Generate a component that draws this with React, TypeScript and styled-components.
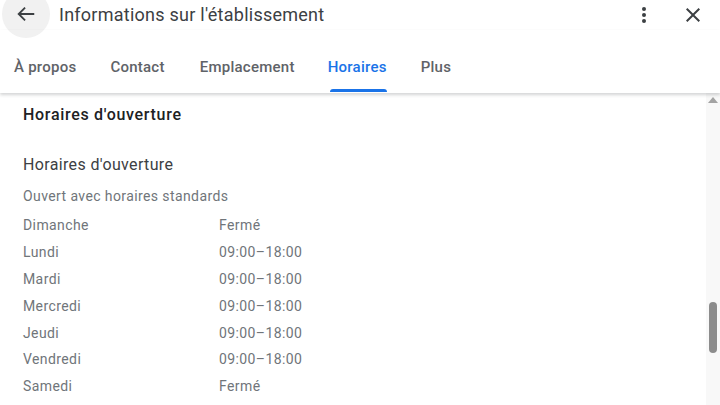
import React from "react";
import styled, { createGlobalStyle } from "styled-components";

const GlobalStyle = createGlobalStyle`
  html, body {
    margin: 0;
    padding: 0;
    background: #ffffff;
    font-family: Roboto, "Liberation Sans", Arial, sans-serif;
    overflow: hidden;
  }
`;

const Page = styled.div`
  width: 720px;
  height: 405px;
  display: flex;
  flex-direction: column;
  overflow: hidden;
  background: #fff;
`;

const TopBar = styled.div`
  height: 30px;
  display: flex;
  align-items: center;
  padding: 0 0 0 2px;
`;

const BackButton = styled.div`
  width: 48px;
  height: 48px;
  border-radius: 50%;
  background: #f1f1f1;
  display: flex;
  align-items: center;
  justify-content: center;
  margin-top: -2px;
  flex-shrink: 0;
`;

const Title = styled.div`
  margin-left: 9px;
  font-size: 18px;
  letter-spacing: 0.25px;
  color: #3c4043;
  flex: 1;
  margin-top: -2px;
`;

const IconButton = styled.div<{ $gap: number }>`
  width: 24px;
  height: 24px;
  display: flex;
  align-items: center;
  justify-content: center;
  margin-right: ${(p) => p.$gap}px;
`;

const Tabs = styled.div`
  display: flex;
  height: 63px;
  align-items: stretch;
  padding-left: 14px;
  box-shadow: 0 2px 3px rgba(60, 64, 67, 0.22);
  position: relative;
  z-index: 1;
`;

const Tab = styled.div<{ $active?: boolean; $gap: number }>`
  display: flex;
  flex-direction: column;
  justify-content: flex-end;
  margin-right: ${(p) => p.$gap}px;
  font-size: 15px;
  font-weight: 500;
  color: ${(p) => (p.$active ? "#1a73e8" : "#5f6368")};
  letter-spacing: 0.25px;
`;

const TabLabel = styled.span`
  padding: 0 0 13px 0;
`;

const TabLine = styled.div<{ $active?: boolean }>`
  height: 3px;
  margin: 0 0 1px 2px;
  border-radius: 3px 3px 0 0;
  background: ${(p) => (p.$active ? "#1a73e8" : "transparent")};
`;

const Body = styled.div`
  flex: 1;
  display: flex;
  min-height: 0;
`;

const Content = styled.div`
  flex: 1;
  padding: 12px 0 0 23px;
`;

const Section = styled.div`
  font-size: 16px;
  font-weight: 500;
  letter-spacing: 0.7px;
  color: #202124;
  line-height: 20px;
`;

const SubTitle = styled.div`
  font-size: 16px;
  letter-spacing: 0.35px;
  color: #3c4043;
  margin-top: 30px;
  line-height: 20px;
`;

const Note = styled.div`
  font-size: 14px;
  letter-spacing: 0.4px;
  color: #70757a;
  margin-top: 11px;
  line-height: 20px;
`;

const HoursTable = styled.div`
  margin-top: 6px;
  display: grid;
  grid-template-columns: 196px auto;
  grid-auto-rows: 26.8px;
  align-items: center;
  font-size: 14px;
  letter-spacing: 0.4px;
  color: #70757a;
`;

const ScrollTrack = styled.div`
  width: 14px;
  background: #f8f8f8;
  display: flex;
  flex-direction: column;
  align-items: center;
`;

const ScrollArrow = styled.div`
  margin-top: 4px;
  width: 0;
  height: 0;
  border-left: 5px solid transparent;
  border-right: 5px solid transparent;
  border-bottom: 6px solid #a3a3a3;
`;

const ScrollThumb = styled.div`
  margin-top: 199px;
  width: 8px;
  height: 51px;
  border-radius: 4px;
  background: #8c8c8c;
`;

const tabs = [
  { label: "À propos", gap: 34 },
  { label: "Contact", gap: 35 },
  { label: "Emplacement", gap: 33 },
  { label: "Horaires", gap: 34, active: true },
  { label: "Plus", gap: 0 },
];

const hours = [
  ["Dimanche", "Fermé"],
  ["Lundi", "09:00–18:00"],
  ["Mardi", "09:00–18:00"],
  ["Mercredi", "09:00–18:00"],
  ["Jeudi", "09:00–18:00"],
  ["Vendredi", "09:00–18:00"],
  ["Samedi", "Fermé"],
];

const App = () => {
  return (
    <Page>
      <GlobalStyle />
      <TopBar>
        <BackButton>
          <svg width="22" height="22" viewBox="0 0 24 24">
            <path
              d="M21 12H4M11 5l-7 7 7 7"
              fill="none"
              stroke="#3c4043"
              strokeWidth="2"
            />
          </svg>
        </BackButton>
        <Title>Informations sur l'établissement</Title>
        <IconButton $gap={25}>
          <svg width="24" height="24" viewBox="0 0 24 24">
            <circle cx="12" cy="6" r="2" fill="#3c4043" />
            <circle cx="12" cy="12" r="2" fill="#3c4043" />
            <circle cx="12" cy="18" r="2" fill="#3c4043" />
          </svg>
        </IconButton>
        <IconButton $gap={15}>
          <svg width="24" height="24" viewBox="0 0 24 24">
            <path
              d="M19 6.41L17.59 5 12 10.59 6.41 5 5 6.41 10.59 12 5 17.59 6.41 19 12 13.41 17.59 19 19 17.59 13.41 12z"
              fill="#3c4043"
            />
          </svg>
        </IconButton>
      </TopBar>
      <Tabs>
        {tabs.map((t) => (
          <Tab key={t.label} $active={t.active} $gap={t.gap}>
            <TabLabel>{t.label}</TabLabel>
            <TabLine $active={t.active} />
          </Tab>
        ))}
      </Tabs>
      <Body>
        <Content>
          <Section>Horaires d'ouverture</Section>
          <SubTitle>Horaires d'ouverture</SubTitle>
          <Note>Ouvert avec horaires standards</Note>
          <HoursTable>
            {hours.map(([day, time]) => (
              <React.Fragment key={day}>
                <span>{day}</span>
                <span>{time}</span>
              </React.Fragment>
            ))}
          </HoursTable>
        </Content>
        <ScrollTrack>
          <ScrollArrow />
          <ScrollThumb />
        </ScrollTrack>
      </Body>
    </Page>
  );
};

export default App;
